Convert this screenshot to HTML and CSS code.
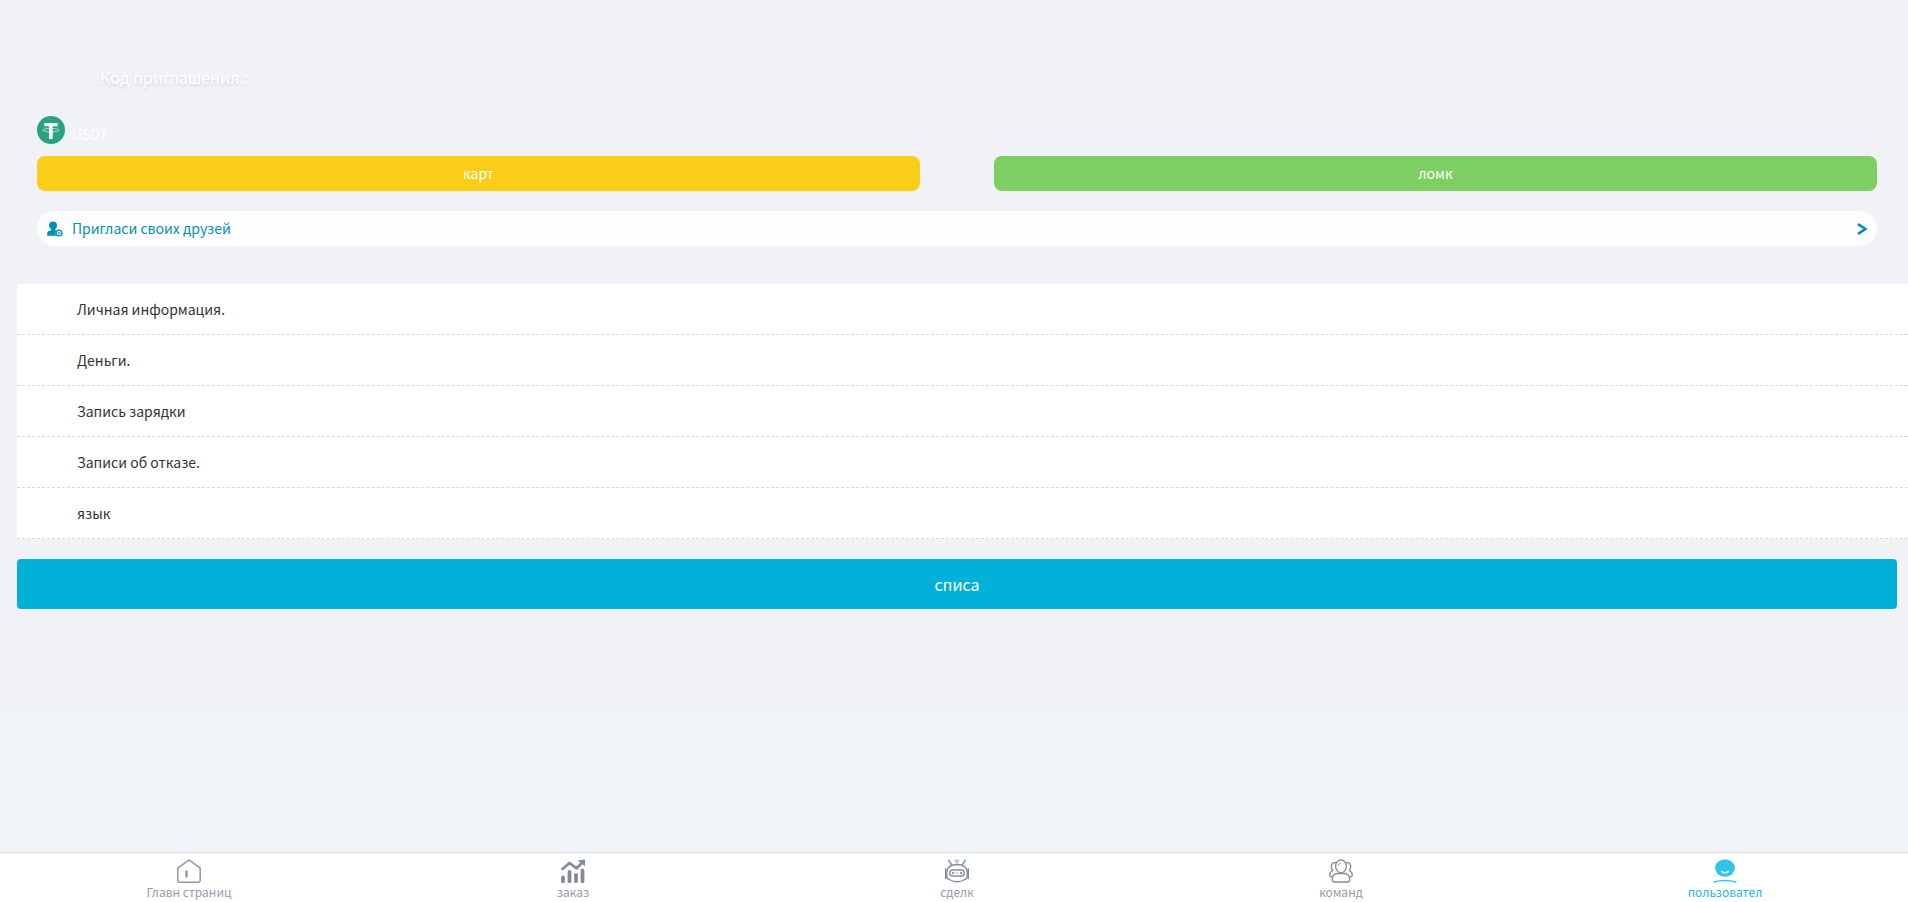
FILE: index.html
```
<!DOCTYPE html>
<html lang="ru">
<head>
<meta charset="utf-8">
<meta name="viewport" content="width=device-width, initial-scale=1">
<title>пользовател</title>
<link rel="stylesheet" href="styles.css">
</head>
<body>
<main class="profile">
  <section class="summary">
    <p class="invite-code">Код приглашения.:</p>
    <div class="coin">
      <svg class="coin-icon" viewBox="0 0 28 28" aria-hidden="true">
        <circle cx="14" cy="14" r="14" fill="#2aa480"/>
        <path d="M7.300 7h13.400v3.200h-5v12.800h-3.600V10.200h-4.800z" fill="#fff"/>
        <ellipse cx="14" cy="14.200" rx="8.200" ry="1.700" fill="none" stroke="#d4ede5" stroke-width=".8"/>
      </svg>
      <span class="coin-name">USDT</span>
    </div>
    <div class="actions">
      <button class="action action-card" type="button">карт</button>
      <button class="action action-cash" type="button">ломк</button>
    </div>
    <a class="friends" href="#">
      <svg class="friends-icon" viewBox="0 0 16 16" aria-hidden="true">
        <path d="M6 .5a4 4 0 0 1 4 4c0 1.700-.8 3-1.700 3.800v.9l1.700.6a3.600 3.600 0 0 0-.7 5H.2v-2.500c0-1.500.8-2 1.800-2.400l2.200-.7v-.9C3 7.500 2 6.200 2 4.500a4 4 0 0 1 4-4z" fill="#0092b0"/>
        <circle cx="12" cy="12" r="2.900" fill="#fdfdfd" stroke="#0092b0" stroke-width="1.300"/>
        <circle cx="12" cy="12" r="1" fill="none" stroke="#0092b0" stroke-width=".9"/>
      </svg>
      <span class="friends-label">Пригласи своих друзей</span>
      <svg class="friends-arrow" viewBox="0 0 10 12" aria-hidden="true">
        <path d="M1 1.200L8.400 6 1 10.800" fill="none" stroke="#0092b0" stroke-width="2.600"/>
      </svg>
    </a>
  </section>
  <nav class="menu">
    <a class="menu-item" href="#">Личная информация.</a>
    <a class="menu-item" href="#">Деньги.</a>
    <a class="menu-item" href="#">Запись зарядки</a>
    <a class="menu-item" href="#">Записи об отказе.</a>
    <a class="menu-item" href="#">язык</a>
  </nav>
  <button class="logout" type="button">списа</button>
</main>
<footer class="tabbar">
  <nav class="tabs">
    <a class="tab" href="#">
      <svg class="tab-icon" viewBox="0 0 24 24" fill="none" stroke="#9297aa" stroke-width="1.500" stroke-linejoin="round" aria-hidden="true">
        <path d="M.8 9.200L12 .8l11.200 8.400v12.300q0 1.700-1.700 1.700h-19q-1.700 0-1.700-1.700z"/>
        <path d="M9.500 11.500v7" stroke-width="2.400"/>
      </svg>
      <span>Главн страниц</span>
    </a>
    <a class="tab" href="#">
      <svg class="tab-icon" viewBox="0 0 24 24" fill="none" stroke="#858a9e" aria-hidden="true">
        <path d="M2 18.300v4M8.500 12.800v9.500M15 16v6.300M21.500 11.500v10.800" stroke-width="3.800" stroke-linecap="round"/>
        <path d="M1.500 10L8.500 4l7 5.300L21 4" stroke-width="2.800" stroke-linecap="round" stroke-linejoin="round"/>
        <path d="M16.500 1.500L24 .5v6.700z" fill="#858a9e" stroke="none"/>
      </svg>
      <span>заказ</span>
    </a>
    <a class="tab" href="#">
      <svg class="tab-icon" viewBox="0 0 24 24" fill="none" stroke="#858ca0" stroke-width="1.400" stroke-linecap="round" aria-hidden="true">
        <path d="M1.800 13Q2.500 5.500 12 5.500T22.200 13v5.500q-.3 1-2.500 2Q16 22.800 12 22.800T4.300 20.500q-2.200-1-2.500-2z"/>
        <path d="M.8 10v9.500M23.200 10v9.500" stroke-width="1.600"/>
        <path d="M6.500 5.500L3.700 1.300M17.500 5.500l2.800-4.200"/>
        <rect x="4.700" y="11" width="14.600" height="6" rx="3"/>
        <circle cx="8" cy="14" r=".7" stroke-width="1"/>
        <circle cx="16" cy="14" r=".7" stroke-width="1"/>
        <path d="M11 14h2" stroke-width=".7"/>
        <path d="M9.700 1.200h4.600M10.500 2.800h3L12 4z" stroke-width="1" stroke="#b1b5c1"/>
      </svg>
      <span>сделк</span>
    </a>
    <a class="tab" href="#">
      <svg class="tab-icon" viewBox="0 0 24 24" fill="none" stroke="#8c8c8c" stroke-width="1.300" stroke-linecap="round" stroke-linejoin="round" aria-hidden="true">
        <ellipse cx="12" cy="7.300" rx="5.400" ry="6.400"/>
        <path d="M8 14.500h8q4.700.5 4.700 6.200 0 2.300-2 2.300H5.300q-2 0-2-2.300 0-5.700 4.700-6.200z"/>
        <path d="M7 3.800Q3.500 2.800 2.500 6q-.8 3.300 1.300 5.500Q.5 13 .7 16.500q0 1.200 2.800 1.300M17 3.800q3.500-1 4.500 2.200.8 3.300-1.300 5.500 3.300 1.500 3.100 5 0 1.200-2.800 1.300"/>
        <path d="M9.300 6.200q.3-1.900 1.900-2.300" stroke-width="1"/>
      </svg>
      <span>команд</span>
    </a>
    <a class="tab tab-active" href="#" aria-current="page">
      <svg class="tab-icon" viewBox="0 0 24 24" fill="none" aria-hidden="true">
        <ellipse cx="12" cy="9" rx="9.900" ry="8.800" fill="#32c5e9"/>
        <path d="M8.700 12.700q3.300 2.100 6.600 0" stroke="#fff" stroke-width="1.400" stroke-linecap="round"/>
        <path d="M1.200 23q10.800-3 21.600 0" stroke="#32c5e9" stroke-width="1.500" stroke-linecap="round"/>
      </svg>
      <span>пользовател</span>
    </a>
  </nav>
</footer>
</body>
</html>
```
FILE: styles.css
```
* {
  box-sizing: border-box;
}

body {
  margin: 0;
  min-height: 100vh;
  display: flex;
  flex-direction: column;
  background: #eef4f8;
  color: #333;
  font-family: "Noto Sans CJK SC", "Noto Sans", sans-serif;
  font-size: 14px;
  line-height: 24px;
}

a {
  color: inherit;
  text-decoration: none;
}

button {
  border: 0;
  color: #fff;
  font: inherit;
  cursor: pointer;
}

.profile {
  padding: 64px 0 98px 17px;
  background: #f0f2f6;
}

.summary {
  display: flex;
  flex-direction: column;
  padding: 0 31px 38px 20px;
}

.invite-code {
  margin: 0 0 26px 63px;
  color: #fff;
  font-size: 16px;
  line-height: 26px;
  text-shadow: 0 2px 3px rgba(0, 0, 0, 0.12);
}

.coin {
  display: flex;
  gap: 7px;
  height: 40px;
}

.coin-icon {
  width: 28px;
  height: 28px;
}

.coin-name {
  padding-top: 6px;
  color: #fff;
}

.actions {
  display: grid;
  grid-template-columns: 1fr 1fr;
  gap: 74px;
  margin-bottom: 20px;
}

.action {
  height: 35px;
  padding-bottom: 2px;
  border-radius: 8px;
}

.action-card {
  background: #facd19;
}

.action-cash {
  background: #7ecf63;
}

.friends {
  display: flex;
  align-items: center;
  gap: 9px;
  height: 35px;
  padding: 0 10px;
  border-radius: 18px;
  background: #fdfdfd;
  color: #0092b0;
}

.friends-icon {
  width: 16px;
  height: 16px;
}

.friends-label {
  flex: 1;
  padding-bottom: 2px;
}

.friends-arrow {
  width: 10px;
  height: 12px;
}

.menu {
  background: #fff;
}

.menu-item {
  display: block;
  padding: 13px 60px;
  border-bottom: 1px dashed #d9d9d9;
}

.logout {
  display: block;
  width: calc(100% - 11px);
  height: 50px;
  margin-top: 20px;
  border-radius: 4px;
  background: #02b1d9;
  font-size: 16px;
}

.tabbar {
  margin-top: auto;
  overflow: hidden;
  border-top: 1px solid #dcdfe3;
  background: #fff;
}

.tabs {
  display: grid;
  grid-template-columns: repeat(5, 1fr);
  height: 49px;
  margin: 0 -9px 0 -3px;
}

.tab {
  display: flex;
  flex-direction: column;
  align-items: center;
  padding-top: 6px;
  color: #9a98a9;
  font-size: 12px;
  line-height: 18px;
}

.tab-active {
  color: #1fb8da;
}

.tab-icon {
  width: 24px;
  height: 24px;
}
```
